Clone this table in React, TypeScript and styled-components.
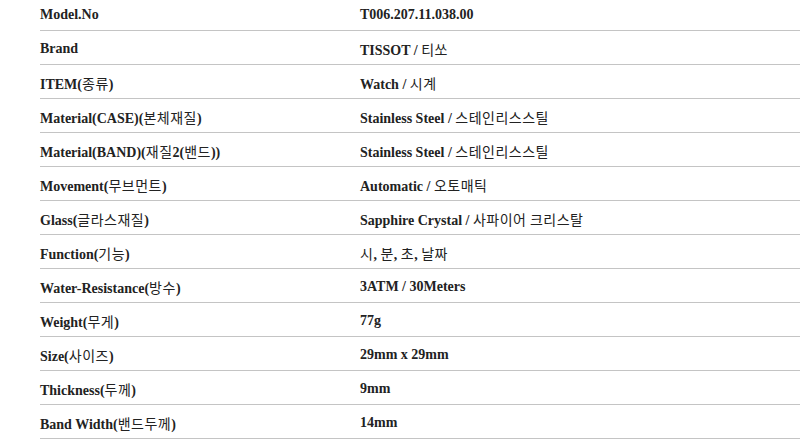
import React from "react";
import styled, { createGlobalStyle } from "styled-components";

interface Spec {
  label: string;
  value: string;
}

const specs: Spec[] = [
  { label: "Model.No", value: "T006.207.11.038.00" },
  { label: "Brand", value: "TISSOT / 티쏘" },
  { label: "ITEM(종류)", value: "Watch / 시계" },
  { label: "Material(CASE)(본체재질)", value: "Stainless Steel / 스테인리스스틸" },
  { label: "Material(BAND)(재질2(밴드))", value: "Stainless Steel / 스테인리스스틸" },
  { label: "Movement(무브먼트)", value: "Automatic / 오토매틱" },
  { label: "Glass(글라스재질)", value: "Sapphire Crystal / 사파이어 크리스탈" },
  { label: "Function(기능)", value: "시, 분, 초, 날짜" },
  { label: "Water-Resistance(방수)", value: "3ATM / 30Meters" },
  { label: "Weight(무게)", value: "77g" },
  { label: "Size(사이즈)", value: "29mm x 29mm" },
  { label: "Thickness(두께)", value: "9mm" },
  { label: "Band Width(밴드두께)", value: "14mm" }
];

const GlobalStyle = createGlobalStyle`
  html, body {
    margin: 0;
    padding: 0;
    background: #fff;
    overflow: hidden;
  }
`;

// hangul runs get the sans font at normal weight, like the original page
const withKorean = (text: string) =>
  text.split(/([\uAC00-\uD7A3\u3131-\u318E]+)/).map((part, i) =>
    /[\uAC00-\uD7A3\u3131-\u318E]/.test(part) ? (
      <Ko key={i}>{part}</Ko>
    ) : (
      <React.Fragment key={i}>{part}</React.Fragment>
    )
  );

const App: React.FC = () => (
  <>
    <GlobalStyle />
    <SpecTable>
      {specs.map(({ label, value }) => (
        <SpecRow key={label}>
          <Label>{withKorean(label)}</Label>
          <Value>{withKorean(value)}</Value>
        </SpecRow>
      ))}
    </SpecTable>
  </>
);

const SpecTable = styled.div`
  margin: -3px 0 0 40px;
  display: flex;
  flex-direction: column;
  font-family: "Liberation Serif", "Times New Roman", serif;
  font-size: 14px;
  font-weight: 700;
  color: #222;
`;

const SpecRow = styled.div`
  display: grid;
  grid-template-columns: 320px 1fr;
  align-items: center;
  height: 34px;
  padding-top: 3px;
  box-sizing: border-box;
  border-bottom: 1px solid #c4c4c4;
`;

const Label = styled.div`
  white-space: nowrap;
`;

const Value = styled.div`
  white-space: nowrap;
`;

const Ko = styled.span`
  font-family: "Noto Sans CJK KR", sans-serif;
  font-weight: 400;
  font-size: 14px;
  letter-spacing: 0.5px;
`;

export default App;
